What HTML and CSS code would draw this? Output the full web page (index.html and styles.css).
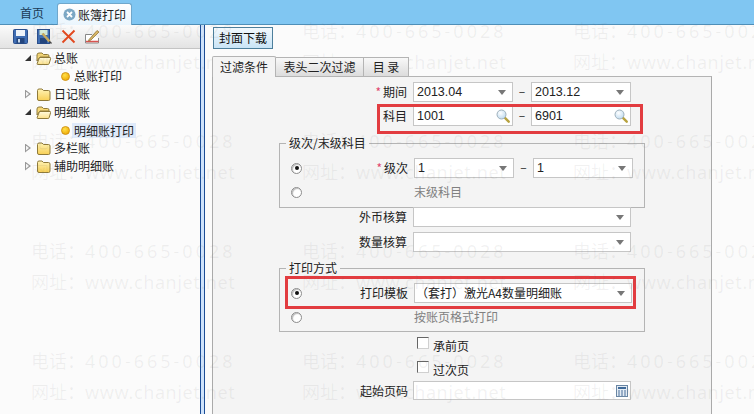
FILE: index.html
```html
<!DOCTYPE html>
<html lang="zh">
<head>
<meta charset="utf-8">
<title>账簿打印</title>
<link rel="stylesheet" href="styles.css">
</head>
<body>
<svg class="defs" width="0" height="0" aria-hidden="true">
  <defs>
    <linearGradient id="fold" x1="0" y1="0" x2="0" y2="1"><stop offset="0" stop-color="#fff3b5"/><stop offset="1" stop-color="#f7cf55"/></linearGradient>
    <linearGradient id="fold2" x1="0" y1="0" x2="0" y2="1"><stop offset="0" stop-color="#fffbe0"/><stop offset="1" stop-color="#fbe08a"/></linearGradient>
    <radialGradient id="ball" cx=".4" cy=".35" r=".7"><stop offset="0" stop-color="#ffe04a"/><stop offset="1" stop-color="#f0a800"/></radialGradient>
    <radialGradient id="lens" cx=".4" cy=".35" r=".7"><stop offset="0" stop-color="#ffffff"/><stop offset="1" stop-color="#bcd9ef"/></radialGradient>
    <symbol id="f-closed" viewBox="0 0 15 13"><path d="M1.500 2.500q0-1.500 1.500-1.500h3l1.500 1.500h5q1.500 0 1.500 1.500v7q0 1.500-1.500 1.500H3q-1.500 0-1.500-1.500z" fill="url(#fold)" stroke="#8f7a3a"/></symbol>
    <symbol id="f-open" viewBox="0 0 15 13"><path d="M1 3q0-2 2-2h3l1.500 1.500h4q1.500 0 1.500 1.500v1H4L1 9z" fill="#f7d877" stroke="#8f7a3a"/><path d="M3.500 5.500H14q1 0 .6 1.200l-1.400 4.800q-.3 1-1.300 1H2q-1.200 0-.8-1.200z" fill="url(#fold2)" stroke="#8f7a3a"/></symbol>
    <symbol id="mag" viewBox="0 0 14 14"><path d="M8.700 8.700l4 4" stroke="#b7a23e" stroke-width="2.400" stroke-linecap="round"/><circle cx="5.500" cy="5.500" r="4.500" fill="url(#lens)" stroke="#9fb0bb"/></symbol>
  </defs>
</svg>
<div class="app">
  <header class="tabbar">
    <div class="tab">首页</div>
    <div class="tab active">
      <svg class="tab-close" width="13" height="13" viewBox="0 0 13 13"><circle cx="6.500" cy="6.500" r="6" fill="#7ba7c4"/><path d="M4 4l5 5M9 4l-5 5" stroke="#fff" stroke-width="1.800"/></svg>
      <span>账簿打印</span>
    </div>
  </header>
  <div class="main">
    <aside class="side">
      <div class="toolbar">
        <svg width="15" height="15" viewBox="0 0 15 15"><rect x="0.500" y="0.500" width="14" height="14" rx="1" fill="#3f6db3" stroke="#2b4f8c"/><rect x="3" y="1" width="9" height="6" fill="#eef3f9"/><rect x="3.500" y="9" width="8" height="5.500" fill="#23457d"/><rect x="5" y="10" width="2" height="3.500" fill="#c8d8ea"/></svg>
        <svg width="15" height="15" viewBox="0 0 15 15"><rect x="0.500" y="0.500" width="12" height="14" fill="#3f6db3" stroke="#2b4f8c"/><rect x="2.500" y="1" width="8" height="5" fill="#d8ecd8"/><rect x="3" y="9" width="7" height="5.500" fill="#23457d"/><path d="M5.500 4.500l7 8" stroke="#c8a95c" stroke-width="2.600"/><path d="M12.500 12.500l2 2" stroke="#444" stroke-width="1.400"/></svg>
        <svg width="15" height="15" viewBox="0 0 15 15"><path d="M1.500 1.500l12 12M13.500 1.500l-12 12" stroke="#e2491f" stroke-width="1.900"/></svg>
        <svg width="15" height="15" viewBox="0 0 15 15"><path d="M7 5.500H.5v8.500h13V9" fill="#fff" stroke="#8a8a8a"/><path d="M1 12.500h12.500" stroke="#d9534f" stroke-width="1.500"/><path d="M4 10.500l8-9 2 1.500-8 8-2.500 1z" fill="#d9b765" stroke="#8b6d2f" stroke-width=".7"/></svg>
      </div>
      <ul class="tree">
        <li class="node"><span class="arrow-box"><i class="arrow open"></i></span><svg class="folder" width="15" height="13"><use href="#f-open"/></svg><span>总账</span></li>
        <li class="leaf"><svg class="dot" width="9" height="9" viewBox="0 0 9 9"><circle cx="4.500" cy="4.500" r="4" fill="url(#ball)" stroke="#c98b10" stroke-width=".8"/></svg><span class="leaf-text">总账打印</span></li>
        <li class="node"><span class="arrow-box"><i class="arrow"></i></span><svg class="folder" width="15" height="13"><use href="#f-closed"/></svg><span>日记账</span></li>
        <li class="node"><span class="arrow-box"><i class="arrow open"></i></span><svg class="folder" width="15" height="13"><use href="#f-open"/></svg><span>明细账</span></li>
        <li class="leaf"><svg class="dot" width="9" height="9" viewBox="0 0 9 9"><circle cx="4.500" cy="4.500" r="4" fill="url(#ball)" stroke="#c98b10" stroke-width=".8"/></svg><span class="leaf-text selected">明细账打印</span></li>
        <li class="node"><span class="arrow-box"><i class="arrow"></i></span><svg class="folder" width="15" height="13"><use href="#f-closed"/></svg><span>多栏账</span></li>
        <li class="node"><span class="arrow-box"><i class="arrow"></i></span><svg class="folder" width="15" height="13"><use href="#f-closed"/></svg><span>辅助明细账</span></li>
      </ul>
    </aside>
    <div class="splitter"></div>
    <section class="content">
      <button class="btn">封面下载</button>
      <nav class="form-tabs">
        <div class="ftab on">过滤条件</div>
        <div class="ftab t2">表头二次过滤</div>
        <div class="ftab t3">目 录</div>
      </nav>
      <div class="panel">
        <div class="row">
          <label class="lab"><em>*</em>期间</label>
          <div class="combo"><span>2013.04</span><i class="caret"></i></div>
          <span class="dash">–</span>
          <div class="combo"><span>2013.12</span><i class="caret"></i></div>
        </div>
        <div class="row">
          <label class="lab">科目</label>
          <div class="combo search"><span>1001</span><svg width="14" height="14"><use href="#mag"/></svg></div>
          <span class="dash">–</span>
          <div class="combo search"><span>6901</span><svg width="14" height="14"><use href="#mag"/></svg></div>
        </div>
        <fieldset class="group g-level">
          <legend>级次/末级科目</legend>
          <div class="grow">
            <i class="radio on"></i>
            <label class="glab"><em>*</em>级次</label>
            <div class="combo"><span>1</span><i class="caret"></i></div>
            <span class="dash">–</span>
            <div class="combo"><span>1</span><i class="caret"></i></div>
          </div>
          <div class="grow">
            <i class="radio"></i>
            <span class="glab"></span>
            <span class="muted">末级科目</span>
          </div>
        </fieldset>
        <div class="row r-wide r-first">
          <label class="lab">外币核算</label>
          <div class="combo wide"><span></span><i class="caret"></i></div>
        </div>
        <div class="row r-wide">
          <label class="lab">数量核算</label>
          <div class="combo wide"><span></span><i class="caret"></i></div>
        </div>
        <fieldset class="group g-print">
          <legend>打印方式</legend>
          <div class="grow">
            <i class="radio on"></i>
            <label class="glab">打印模板</label>
            <div class="combo wide"><span class="cjk">（套打）激光A4数量明细账</span><i class="caret"></i></div>
          </div>
          <div class="grow">
            <i class="radio"></i>
            <span class="glab"></span>
            <span class="muted">按账页格式打印</span>
          </div>
        </fieldset>
        <div class="check-row first"><i class="check"></i><span>承前页</span></div>
        <div class="check-row"><i class="check"></i><span>过次页</span></div>
        <div class="row r-page">
          <label class="lab">起始页码</label>
          <div class="combo wide search"><span></span><svg width="12" height="12" viewBox="0 0 12 12"><rect x=".5" y=".5" width="11" height="11" fill="#e4ecf4" stroke="#6a86a3"/><rect x="2" y="2" width="8" height="2" fill="#3f6a99"/><path d="M2 6h2M5 6h2M8 6h2M2 8h2M5 8h2M8 8h2M2 10h2M5 10h2M8 10h2" stroke="#4a6f9a"/></svg></div>
        </div>
      </div>
    </section>
  </div>
</div>
<div class="mark-red m1"></div>
<div class="mark-red m2"></div>
<div class="watermarks">
  <div class="wm"><span>电话：<b class="ph">400-665-0028</b></span><span>网址：<b class="ur">www.chanjet.net</b></span></div>
  <div class="wm"><span>电话：<b class="ph">400-665-0028</b></span><span>网址：<b class="ur">www.chanjet.net</b></span></div>
  <div class="wm"><span>电话：<b class="ph">400-665-0028</b></span><span>网址：<b class="ur">www.chanjet.net</b></span></div>
  <div class="wm"><span>电话：<b class="ph">400-665-0028</b></span><span>网址：<b class="ur">www.chanjet.net</b></span></div>
  <div class="wm"><span>电话：<b class="ph">400-665-0028</b></span><span>网址：<b class="ur">www.chanjet.net</b></span></div>
  <div class="wm"><span>电话：<b class="ph">400-665-0028</b></span><span>网址：<b class="ur">www.chanjet.net</b></span></div>
  <div class="wm"><span>电话：<b class="ph">400-665-0028</b></span><span>网址：<b class="ur">www.chanjet.net</b></span></div>
  <div class="wm"><span>电话：<b class="ph">400-665-0028</b></span><span>网址：<b class="ur">www.chanjet.net</b></span></div>
  <div class="wm"><span>电话：<b class="ph">400-665-0028</b></span><span>网址：<b class="ur">www.chanjet.net</b></span></div>
  <div class="wm"><span>电话：<b class="ph">400-665-0028</b></span><span>网址：<b class="ur">www.chanjet.net</b></span></div>
  <div class="wm"><span>电话：<b class="ph">400-665-0028</b></span><span>网址：<b class="ur">www.chanjet.net</b></span></div>
  <div class="wm"><span>电话：<b class="ph">400-665-0028</b></span><span>网址：<b class="ur">www.chanjet.net</b></span></div>
</div>
</body>
</html>
```
FILE: styles.css
```css
* { box-sizing: border-box; }
html, body { margin: 0; padding: 0; width: 754px; height: 414px; overflow: hidden; }
body { font: 12px/20px "Noto Sans CJK SC", "Liberation Sans", sans-serif; color: #222; position: relative; background: #fff; }
.defs { position: absolute; }

.app { display: flex; flex-direction: column; height: 414px; }
.tabbar { height: 25px; flex: none; display: flex; align-items: flex-end; background: #80c6f2; border-bottom: 1px solid #4f8fb8; padding-left: 20px; }
.tab { width: 37px; height: 21px; color: #1b3a55; }
.tab.active { width: 75px; height: 22px; margin-bottom: -1px; padding-left: 5px; display: flex; align-items: center; gap: 2px; background: linear-gradient(#fff, #eaf5fd); border: 1px solid #6fa7cc; border-bottom: 0; border-radius: 3px 3px 0 0; color: #222; position: relative; }
.tab-close { flex: none; }

.main { flex: 1; display: flex; min-height: 0; }
.side { width: 200px; flex: none; background: #fbfbfb; }
.toolbar { height: 24px; display: flex; align-items: center; gap: 9px; padding-left: 13px; background: linear-gradient(#fbfbfb, #e3e3e3); border-bottom: 1px solid #c4c4c4; }
.tree { list-style: none; margin: 0; padding: 0; }
.tree li { height: 18px; display: flex; align-items: center; white-space: nowrap; }
.node { padding-left: 25px; }
.leaf { padding-left: 61px; }
.arrow-box { width: 11px; flex: none; display: flex; align-items: center; }
.arrow { display: block; width: 6px; height: 9px; background: #999; clip-path: polygon(0 0, 100% 50%, 0 100%); position: relative; }
.arrow::after { content: ""; position: absolute; left: 1px; top: 2px; width: 3px; height: 5px; background: #f4f4f4; clip-path: polygon(0 0, 100% 50%, 0 100%); }
.arrow.open { width: 6px; height: 6px; background: #333; clip-path: polygon(100% 0, 100% 100%, 0 100%); }
.arrow.open::after { display: none; }
.folder { flex: none; margin-right: 3px; }
.dot { flex: none; margin-right: 2px; }
.leaf-text { padding-left: 2px; padding-right: 2px; }
.selected { background: #dfeafa; line-height: 15px; }

.splitter { width: 5px; flex: none; background: #cfe3fb; border-left: 1px solid #1c4d96; border-right: 1px solid #1c4d96; }

.content { flex: 1; min-width: 0; padding: 2px 43px 0 7px; background: #fbfbfb; display: flex; flex-direction: column; align-items: flex-start; }
.btn { display: block; font: inherit; height: 22px; width: 60px; margin: 0 0 0 1px; padding: 0; border: 1px solid #4d7f9c; background: linear-gradient(#f3f9fd, #c9e4f6); color: #111; flex: none; }

.form-tabs { display: flex; align-items: flex-end; height: 21px; margin-top: 7px; position: relative; z-index: 1; flex: none; }
.ftab { height: 20px; line-height: 18px; text-align: center; border: 1px solid #b4b4b4; border-left: 0; background: linear-gradient(#f8f8f8, #dcdcdc); white-space: nowrap; }
.ftab.on { width: 64px; height: 21px; line-height: 20px; background: #f4f4f4; border: 1px solid #b4b4b4; border-bottom: 0; border-radius: 2px 2px 0 0; }
.t2 { width: 88px; }
.t3 { width: 45px; }

.panel { flex: 1; width: 500px; margin-top: -1px; padding-top: 5px; border-top: 1px solid #b4b4b4; border-left: 1px solid #aaa; border-right: 1px solid #aaa; background: #f4f4f4; }
.row { display: flex; height: 24px; }
.lab { width: 200px; padding-right: 6px; text-align: right; flex: none; white-space: nowrap; }
em { color: #e0476f; font-style: normal; margin-right: 2px; }
.combo { width: 100px; height: 20px; border: 1px solid #c6c6c6; background: #fff; display: flex; align-items: center; justify-content: space-between; padding: 0 6px 0 3px; flex: none; font-family: "Liberation Sans", "Noto Sans CJK SC", sans-serif; font-size: 12.5px; }
.combo.search { padding-right: 2px; }
.cjk { font-family: "Noto Sans CJK SC", sans-serif; font-size: 12px; margin-left: -2px; }
.caret { width: 0; height: 0; border: 4px solid transparent; border-top: 5px solid #777; border-bottom: 0; }
.dash { width: 18px; line-height: 18px; text-align: center; flex: none; }
.wide { width: 218px; }

.group { margin: 6px 0 0 66px; padding: 8px 0 0; border: 1px solid #b4b4b4; width: 366px; min-width: 0; }
.group legend { margin-left: 6px; padding: 0 3px; line-height: 14px; }
.g-level { height: 72px; }
.g-print { height: 71px; margin-top: 4px; }
.grow { display: flex; align-items: center; height: 24px; }
.grow .combo { align-self: flex-start; }
.grow .dash { align-self: flex-start; width: 19px; }
.radio { width: 11px; height: 11px; margin: -4px 0 0 11px; flex: none; border-radius: 50%; border: 1px solid #8c8c8c; background: #fff; box-shadow: inset 1px 1px 1px #bbb; position: relative; }
.radio.on::after { content: ""; position: absolute; left: 2.5px; top: 2.5px; width: 4px; height: 4px; border-radius: 50%; background: #111; }
.glab { width: 112px; padding-right: 6px; flex: none; text-align: right; align-self: flex-start; }
.muted { color: #808080; margin-top: -4px; }

.r-first { margin-top: -1px; height: 25px; }
.r-wide { height: 25px; }
.check-row { display: flex; height: 24px; padding-left: 204px; }
.check-row.first { margin-top: 4px; }
.check { width: 12px; height: 12px; margin: 1px 4px 0 0; flex: none; background: #fff; border: 1px solid #d0d0d0; border-top-color: #666; border-left-color: #666; }
.r-page { margin-top: -3px; }
.r-page .lab { padding-right: 5px; }
.r-page .combo { height: 19px; }

.mark-red { position: absolute; border: 3px solid #e23c40; pointer-events: none; }
.m1 { left: 377px; top: 104px; width: 266px; height: 30px; }
.m2 { left: 285px; top: 276px; width: 351px; height: 33px; }

.watermarks { position: absolute; left: 0; top: 0; width: 754px; height: 414px; overflow: hidden; padding: 15px 0 0 31px; display: grid; grid-template-columns: repeat(3, 271px); grid-auto-rows: 110px; pointer-events: none; }
.wm { display: flex; flex-direction: column; font: 18px/30px "Noto Sans CJK SC", sans-serif; color: rgba(110,110,110,.09); white-space: nowrap; }
.wm b { font-family: "Noto Sans", sans-serif; font-weight: 400; }
.ph { letter-spacing: 3px; }
.ur { letter-spacing: .6px; }
```
